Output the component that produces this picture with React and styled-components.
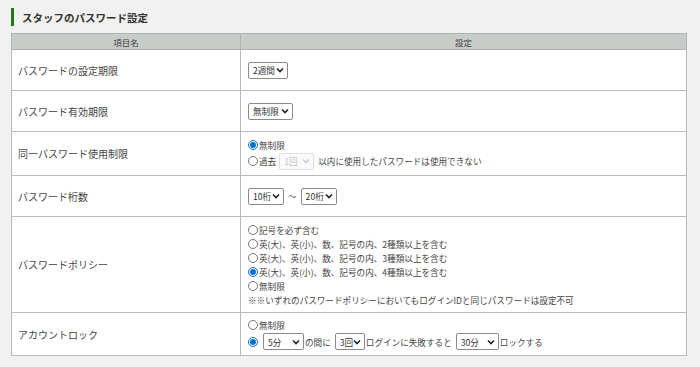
import React from "react";
import styled, { createGlobalStyle } from "styled-components";

const GlobalStyle = createGlobalStyle`
  html, body {
    margin: 0;
    padding: 0;
    background: #f0f1f0;
    font-family: "Noto Sans CJK JP", "Noto Sans", sans-serif;
    color: #333;
  }
`;

const chevron =
  "url(\"data:image/svg+xml;utf8,<svg xmlns='http://www.w3.org/2000/svg' width='8' height='6' viewBox='0 0 8 6'><path d='M1 1.5 L4 4.5 L7 1.5' fill='none' stroke='%23222' stroke-width='1.6'/></svg>\")";

const Page = styled.div`
  padding: 8px 13px 0 11px;
`;

const Title = styled.h2`
  margin: 0 0 7px;
  height: 18px;
  display: flex;
  align-items: center;
  border-left: 3px solid #1f7a12;
  padding-left: 8px;
  font-size: 10.5px;
  font-weight: bold;
  color: #333;
`;

const Table = styled.table`
  width: 676px;
  border-collapse: collapse;
  background: #fff;
  border: 1px solid #b4b8b4;
  border-left-color: #a8aca8;
`;

const HeadCell = styled.th`
  height: 15px;
  padding: 0;
  background: #c8ccc8;
  border: 1px solid #b0b4b0;
  font-size: 8.5px;
  font-weight: normal;
  color: #444;
  width: ${(p) => p.$w || "auto"};
`;

const LabelCell = styled.td`
  height: ${(p) => p.$h}px;
  padding: 0 0 0 6px;
  border: 1px solid #b8bcb8;
  font-size: 10px;
  color: #444;
  vertical-align: middle;
`;

const ValueCell = styled.td`
  padding: 0 0 0 7px;
  border: 1px solid #b8bcb8;
  font-size: 8.6px;
  color: #444;
  vertical-align: middle;
`;

const Inline = styled.div`
  display: flex;
  align-items: center;
  gap: ${(p) => p.$gap || 0}px;
  margin-left: ${(p) => p.$ml || 0}px;
`;

const Stack = styled.div`
  display: flex;
  flex-direction: column;
`;

const RadioLine = styled.label`
  display: flex;
  align-items: center;
  height: ${(p) => p.$h || 14}px;
  white-space: nowrap;
`;

const Radio = styled.input.attrs({ type: "radio" })`
  width: 10px;
  height: 10px;
  margin: 0 1px 0 0;
  accent-color: #0a6ed1;
`;

const Select = styled.select`
  appearance: none;
  -webkit-appearance: none;
  width: ${(p) => p.$w}px;
  height: 17px;
  margin-left: ${(p) => p.$ml || 0}px;
  font-family: "Noto Sans CJK JP", "Noto Sans", sans-serif;
  font-size: 8.6px;
  color: #333;
  padding: 0 10px 0 4px;
  border: 1px solid #8a8a8a;
  border-radius: 2px;
  background: #fff ${chevron} no-repeat right 3px center / 8px 6px;

  &:disabled {
    color: #aaa;
    border-color: #d4d4d4;
    background-color: #fafafa;
    background-image: url("data:image/svg+xml;utf8,<svg xmlns='http://www.w3.org/2000/svg' width='8' height='6' viewBox='0 0 8 6'><path d='M1 1.5 L4 4.5 L7 1.5' fill='none' stroke='%23aaa' stroke-width='1.2'/></svg>");
  }
`;

const Note = styled.div`
  height: 14px;
  display: flex;
  align-items: center;
  white-space: nowrap;
`;

const Tilde = styled.span`
  color: #666;
  margin: 0 4px;
`;

export default function App() {
  return (
    <>
      <GlobalStyle />
      <Page>
        <Title>スタッフのパスワード設定</Title>
        <Table>
          <thead>
            <tr>
              <HeadCell $w="228px">項目名</HeadCell>
              <HeadCell>設定</HeadCell>
            </tr>
          </thead>
          <tbody>
            <tr>
              <LabelCell $h={40}>パスワードの設定期限</LabelCell>
              <ValueCell>
                <Select $w={40} defaultValue="2">
                  <option value="2">2週間</option>
                </Select>
              </ValueCell>
            </tr>
            <tr>
              <LabelCell $h={40}>パスワード有効期限</LabelCell>
              <ValueCell>
                <Select $w={45} defaultValue="0">
                  <option value="0">無制限</option>
                </Select>
              </ValueCell>
            </tr>
            <tr>
              <LabelCell $h={43}>同一パスワード使用制限</LabelCell>
              <ValueCell>
                <Stack>
                  <RadioLine $h={15}>
                    <Radio name="reuse" defaultChecked />
                    無制限
                  </RadioLine>
                  <RadioLine $h={18}>
                    <Radio name="reuse" />
                    過去
                    <Inline $gap={4} $ml={3}>
                      <Select $w={35} disabled>
                        <option>1回</option>
                      </Select>
                      以内に使用したパスワードは使用できない
                    </Inline>
                  </RadioLine>
                </Stack>
              </ValueCell>
            </tr>
            <tr>
              <LabelCell $h={40}>パスワード桁数</LabelCell>
              <ValueCell>
                <Inline>
                  <Select $w={36}>
                    <option>10桁</option>
                  </Select>
                  <Tilde>～</Tilde>
                  <Select $w={36}>
                    <option>20桁</option>
                  </Select>
                </Inline>
              </ValueCell>
            </tr>
            <tr>
              <LabelCell $h={95}>パスワードポリシー</LabelCell>
              <ValueCell>
                <Stack>
                  <RadioLine>
                    <Radio name="policy" />
                    記号を必ず含む
                  </RadioLine>
                  <RadioLine>
                    <Radio name="policy" />
                    英(大)、英(小)、数、記号の内、2種類以上を含む
                  </RadioLine>
                  <RadioLine>
                    <Radio name="policy" />
                    英(大)、英(小)、数、記号の内、3種類以上を含む
                  </RadioLine>
                  <RadioLine>
                    <Radio name="policy" defaultChecked />
                    英(大)、英(小)、数、記号の内、4種類以上を含む
                  </RadioLine>
                  <RadioLine>
                    <Radio name="policy" />
                    無制限
                  </RadioLine>
                  <Note>
                    ※※いずれのパスワードポリシーにおいてもログインIDと同じパスワードは設定不可
                  </Note>
                </Stack>
              </ValueCell>
            </tr>
            <tr>
              <LabelCell $h={42}>アカウントロック</LabelCell>
              <ValueCell>
                <Stack>
                  <RadioLine $h={15}>
                    <Radio name="lock" />
                    無制限
                  </RadioLine>
                  <RadioLine $h={19}>
                    <Radio name="lock" defaultChecked />
                    <Inline $gap={1} $ml={4}>
                      <Select $w={41}>
                        <option>5分</option>
                      </Select>
                      の間に
                      <Select $w={30} $ml={3}>
                        <option>3回</option>
                      </Select>
                      ログインに失敗すると
                      <Select $w={43} $ml={3}>
                        <option>30分</option>
                      </Select>
                      ロックする
                    </Inline>
                  </RadioLine>
                </Stack>
              </ValueCell>
            </tr>
          </tbody>
        </Table>
      </Page>
    </>
  );
}
